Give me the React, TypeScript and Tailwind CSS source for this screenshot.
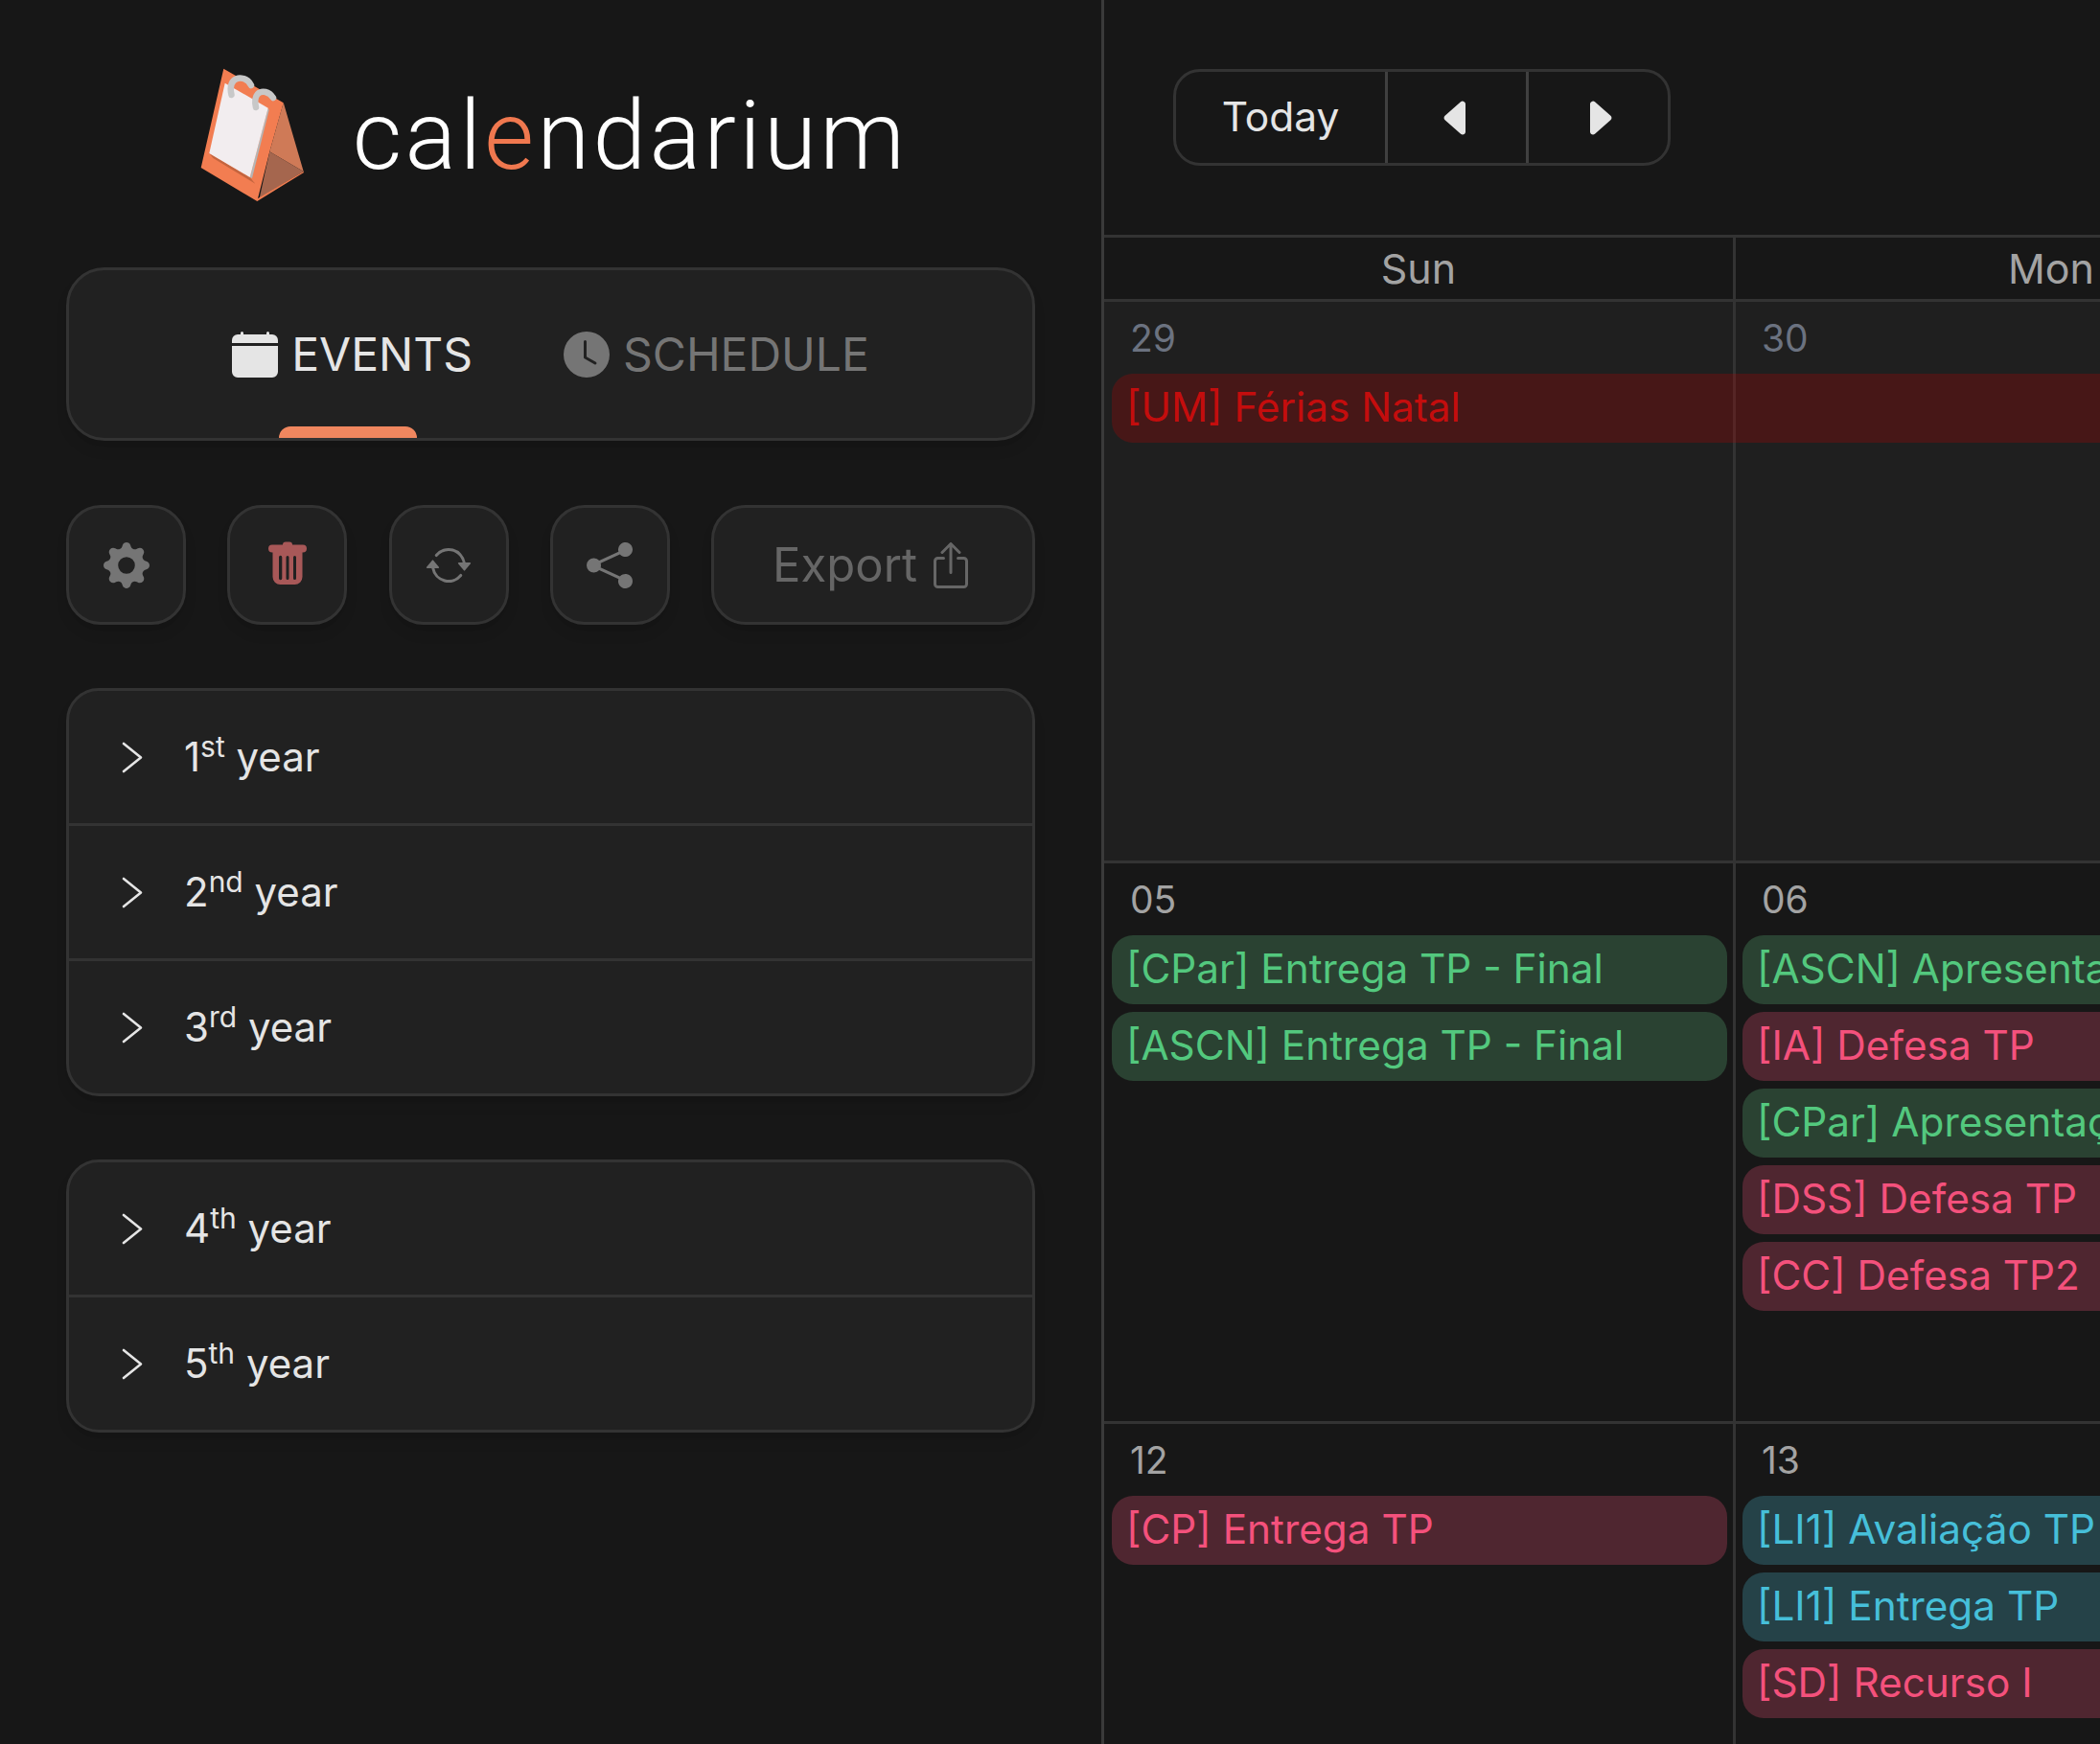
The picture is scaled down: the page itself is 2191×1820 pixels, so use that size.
import React from "react";
import {
  BsCalendarFill,
  BsClockFill,
  BsGearFill,
  BsArrowRepeat,
  BsShareFill,
  BsBoxArrowUp,
  BsCaretLeftFill,
  BsCaretRightFill,
} from "react-icons/bs";

function Logo() {
  return (
    <svg viewBox="0 0 150 160" className="w-[150px] h-[160px] shrink-0 -ml-[20px] -mr-[20px]" aria-hidden>
      <polygon points="44.3,11.7 106.7,47.3 92.3,98.3 79.3,150 20.7,115" fill="#f27d51" />
      <polygon points="106.7,47 127.7,119 92.3,98.3" fill="#cf7a57" />
      <polygon points="92.3,98.3 127.7,119 81.7,146.7" fill="#a5664e" />
      <polygon points="127.7,119 128,120 79.3,150 78.500,148" fill="#f27d51" />
      <polygon points="29.3,100 71.7,125 77.3,131.7 33.3,105" fill="#c4653f" />
      <polygon points="90.7,52.7 91.7,55 74,126 71.7,125" fill="#b5b5b5" />
      <polygon points="45.7,26.7 90.7,52.7 71.7,125 29.3,100" fill="#f2edef" />
      <path d="M52.500 39 C49 24 58 20 65 22 C69 23 71 25 73 29" fill="none" stroke="#c8c8c8" strokeWidth="6.500" strokeLinecap="round" />
      <path d="M78 52 C75 38 82 35 88 36 C92 37 94 39 96 42" fill="none" stroke="#c8c8c8" strokeWidth="6.500" strokeLinecap="round" />
    </svg>
  );
}

function TrashIcon() {
  return (
    <svg viewBox="0 0 40 46" className="w-[40px] h-[46px] -mt-[4px]" aria-hidden>
      <path
        fillRule="evenodd"
        d="M15 3.500a3 3 0 0 1 3-3h4a3 3 0 0 1 3 3h11a4 4 0 0 1 0 8H35.500v25.500a8 8 0 0 1-8 8h-15a8 8 0 0 1-8-8V11.500H4a4 4 0 0 1 0-8zM11 16.500v22a1.500 1.500 0 0 0 3.300 0v-22a1.500 1.500 0 0 0-3.300 0zm7.500 0v22a1.500 1.500 0 0 0 3 0v-22a1.500 1.500 0 0 0-3 0zm7.500 0v22a1.500 1.500 0 0 0 3 0v-22a1.500 1.500 0 0 0-3 0z"
        fill="#a85858"
      />
    </svg>
  );
}

function Chevron() {
  return (
    <svg viewBox="0 0 22 33" className="w-[22px] h-[33px] shrink-0" aria-hidden>
      <path d="M2 2 L20 16.500 L2 31" fill="none" stroke="#e5e5e5" strokeWidth="2.600" strokeLinecap="round" strokeLinejoin="round" />
    </svg>
  );
}

function YearRow({ n, suffix, last }: { n: string; suffix: string; last?: boolean }) {
  return (
    <div className={`h-[138px] box-content flex items-center pl-[55px] ${last ? "" : "border-b-[3px] border-[#333333]"}`}>
      <Chevron />
      <span className="ml-[43px] pb-[2px] text-[42px] text-[#e5e5e5] whitespace-nowrap">
        {n}
        <sup className="text-[30px]">{suffix}</sup> year
      </span>
    </div>
  );
}

function YearCard({ children }: { children: React.ReactNode }) {
  return (
    <div className="bg-[#212121] border-[3px] border-[#333333] rounded-[34px] shadow-lg overflow-hidden">
      {children}
    </div>
  );
}

function IconButton({ children }: { children: React.ReactNode }) {
  return (
    <button className="w-[125px] h-[125px] shrink-0 flex items-center justify-center bg-[#212121] border-[3px] border-[#333333] rounded-[36px] shadow-lg">
      {children}
    </button>
  );
}

type Tone = "green" | "pink" | "blue";
const toneClass: Record<Tone, string> = {
  green: "bg-[#2a4232] text-[#53c87e]",
  pink: "bg-[#4f2630] text-[#f4517c]",
  blue: "bg-[#254248] text-[#46bfd9]",
};

function EventBar({ tone, text }: { tone: Tone; text: string }) {
  return (
    <div className={`w-[642px] h-[72px] rounded-[22px] pl-[15px] pb-[2px] flex items-center text-[42.3px] whitespace-nowrap overflow-hidden ${toneClass[tone]}`}>
      {text}
    </div>
  );
}

function DayCell({
  day,
  muted,
  first,
  events,
}: {
  day: string;
  muted?: boolean;
  first?: boolean;
  events?: { tone: Tone; text: string }[];
}) {
  return (
    <div className={`shrink-0 ${first ? "w-[659px] border-r-[3px] border-[#333333]" : "w-[658px]"}`}>
      <div className={`h-[75px] pl-[27px] pt-[2px] flex items-center text-[39px] ${muted ? "text-[#6b7280]" : "text-[#a3a3a3]"}`}>
        {day}
      </div>
      <div className={`flex flex-col gap-[8px] ${first ? "pl-[8px]" : "pl-[7px]"}`}>
        {events?.map((e) => (
          <EventBar key={e.text} tone={e.tone} text={e.text} />
        ))}
      </div>
    </div>
  );
}

export default function App() {
  return (
    <div className="w-[2191px] h-[1820px] overflow-hidden flex bg-[#171717] font-['Inter',sans-serif]">
      <aside className="w-[1152px] shrink-0 border-r-[3px] border-[#3a3a3a] pl-[69px] pr-[69px]">
        <div className="h-[279px] flex justify-center items-start pt-[60px] pl-[7px]">
          <Logo />
          <div className="ml-[49px] mt-[22px] text-[100px] leading-[120px] font-light tracking-[3.300px] text-white font-['Roboto',sans-serif]">
            cal<span className="text-[#f0784f]">e</span>ndarium
          </div>
        </div>

        <div className="relative h-[181px] bg-[#212121] border-[3px] border-[#333333] rounded-[40px] shadow-lg flex items-center justify-center gap-[95px] text-[48px]">
          <div className="flex items-center gap-[14px] text-[#e5e5e5]">
            <BsCalendarFill size={48} />
            <span>EVENTS</span>
          </div>
          <div className="flex items-center gap-[14px] text-[#757575]">
            <BsClockFill size={48} />
            <span>SCHEDULE</span>
          </div>
          <div className="absolute left-[219px] bottom-0 w-[144px] h-[12px] rounded-t-[12px] bg-[#f0875f]" />
        </div>

        <div className="mt-[67px] flex justify-between">
          <IconButton>
            <BsGearFill size={48} className="text-[#757575]" />
          </IconButton>
          <IconButton>
            <TrashIcon />
          </IconButton>
          <IconButton>
            <BsArrowRepeat size={48} className="text-[#757575]" />
          </IconButton>
          <IconButton>
            <BsShareFill size={48} className="text-[#757575]" />
          </IconButton>
          <button className="w-[338px] h-[125px] flex items-center justify-center gap-[11px] bg-[#212121] border-[3px] border-[#333333] rounded-[36px] shadow-lg text-[49px] text-[#666666]">
            <span>Export</span>
            <BsBoxArrowUp size={48} />
          </button>
        </div>

        <div className="mt-[66px]">
          <YearCard>
            <YearRow n="1" suffix="st" />
            <YearRow n="2" suffix="nd" />
            <YearRow n="3" suffix="rd" last />
          </YearCard>
        </div>
        <div className="mt-[66px]">
          <YearCard>
            <YearRow n="4" suffix="th" />
            <YearRow n="5" suffix="th" last />
          </YearCard>
        </div>
      </aside>

      <main className="flex-1 min-w-0 overflow-hidden">
        <div className="h-[245px] pt-[72px] pl-[72px]">
          <div className="inline-flex h-[101px] border-[3px] border-[#333333] rounded-[28px] bg-[#171717]">
            <button className="w-[221px] pb-[2px] flex items-center justify-center text-[42.5px] text-[#e5e5e5] border-r-[3px] border-[#404040]">
              Today
            </button>
            <button className="w-[147px] flex items-center justify-center text-[#e5e5e5] border-r-[3px] border-[#404040]">
              <BsCaretLeftFill size={48} />
            </button>
            <button className="w-[145px] flex items-center justify-center text-[#e5e5e5]">
              <BsCaretRightFill size={48} />
            </button>
          </div>
        </div>

        <div className="flex h-[70px] border-y-[3px] border-[#333333] text-[43px] text-[#a3a3a3]">
          <div className="w-[659px] shrink-0 border-r-[3px] border-[#333333] flex items-center justify-center">Sun</div>
          <div className="w-[658px] shrink-0 flex items-center justify-center">Mon</div>
        </div>

        <div className="relative flex h-[586px] border-b-[3px] border-[#333333] bg-[#1f1f1f]">
          <DayCell day="29" muted first />
          <DayCell day="30" muted />
          <div className="absolute left-[8px] top-[75px] w-[1400px] h-[72px] rounded-l-[22px] pl-[15px] pb-[2px] flex items-center text-[42.3px] text-[#c40d0d] bg-[#c00000]/25 whitespace-nowrap">
            [UM] Férias Natal
          </div>
        </div>

        <div className="flex h-[585px] border-b-[3px] border-[#333333]">
          <DayCell
            day="05"
            first
            events={[
              { tone: "green", text: "[CPar] Entrega TP - Final" },
              { tone: "green", text: "[ASCN] Entrega TP - Final" },
            ]}
          />
          <DayCell
            day="06"
            events={[
              { tone: "green", text: "[ASCN] Apresentação TP" },
              { tone: "pink", text: "[IA] Defesa TP" },
              { tone: "green", text: "[CPar] Apresentação TP" },
              { tone: "pink", text: "[DSS] Defesa TP" },
              { tone: "pink", text: "[CC] Defesa TP2" },
            ]}
          />
        </div>

        <div className="flex h-[340px]">
          <DayCell day="12" first events={[{ tone: "pink", text: "[CP] Entrega TP" }]} />
          <DayCell
            day="13"
            events={[
              { tone: "blue", text: "[LI1] Avaliação TP" },
              { tone: "blue", text: "[LI1] Entrega TP" },
              { tone: "pink", text: "[SD] Recurso I" },
            ]}
          />
        </div>
      </main>
    </div>
  );
}
